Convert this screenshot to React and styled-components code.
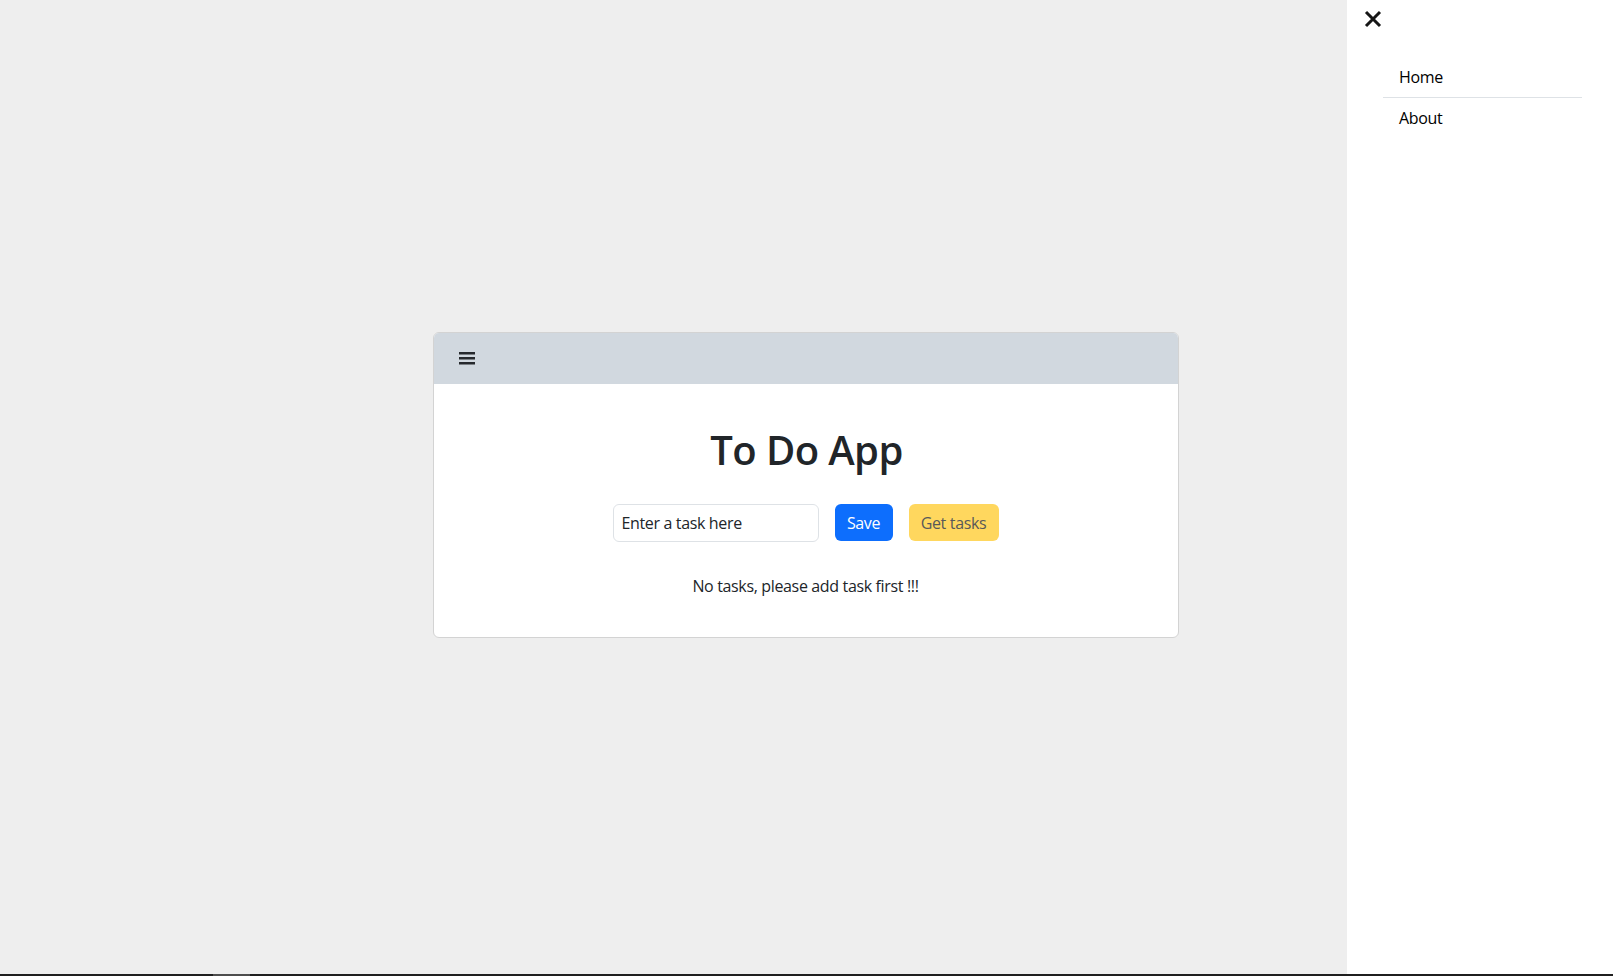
import React from "react";
import styled, { createGlobalStyle } from "styled-components";

const GlobalStyle = createGlobalStyle`
  html, body { margin: 0; padding: 0; }
  body {
    background: #eeeeee;
    font-family: "Open Sans", "Noto Sans", sans-serif;
    letter-spacing: -0.35px;
    color: #212529;
    overflow: hidden;
  }
  * { box-sizing: border-box; }
`;

const Page = styled.div`
  height: 974px;
  display: flex;
  align-items: center;
  justify-content: center;
`;

const Card = styled.div`
  width: 746px;
  background: #fff;
  border: 1px solid #d3d3d3;
  border-radius: 6px;
  overflow: hidden;
  margin-top: -5px;
  margin-left: -2px;
`;

const CardHeader = styled.div`
  height: 51px;
  background: #d1d8df;
  display: flex;
  align-items: center;
  padding-left: 25px;
`;

const MenuButton = styled.button`
  border: 0;
  background: transparent;
  padding: 0;
  width: 16px;
  height: 13px;
  display: flex;
  cursor: pointer;
`;

const CardBody = styled.div`
  padding: 42px 16px 39px;
  display: flex;
  flex-direction: column;
  align-items: center;
`;

const Title = styled.h1`
  margin: 0 0 0 2px;
  font-size: 40px;
  line-height: 48px;
  font-weight: 600;
  letter-spacing: -0.6px;
  color: #212529;
`;

const FormRow = styled.div`
  margin-top: 30px;
  display: flex;
  gap: 16px;
  align-items: center;
`;

const TaskInput = styled.input`
  width: 206px;
  height: 38px;
  border: 1px solid #dee2e6;
  border-radius: 6px;
  padding: 6px 8px;
  font-family: inherit;
  letter-spacing: inherit;
  font-size: 16px;
  color: #212529;
  outline: none;
  &::placeholder { color: #212529; }
`;

const Button = styled.button`
  height: 37px;
  border: 0;
  border-radius: 6px;
  padding: 0;
  white-space: nowrap;
  font-family: inherit;
  letter-spacing: inherit;
  font-size: 16px;
  background: ${(p) => (p.$variant === "warning" ? "#ffd75e" : "#0d6efd")};
  color: ${(p) => (p.$variant === "warning" ? "#595959" : "#ffffff")};
  width: ${(p) => p.$w}px;
`;

const Message = styled.p`
  margin: 32px 0 0;
  font-size: 16px;
  line-height: 24px;
`;

const Sidebar = styled.aside`
  position: fixed;
  top: 0;
  right: 0;
  width: 266px;
  height: 974px;
  background: #fff;
  display: flex;
  flex-direction: column;
`;

const SideHeader = styled.div`
  height: 57px;
  padding: 10px 0 0 17px;
`;

const CloseButton = styled.button`
  border: 0;
  background: transparent;
  padding: 0;
  width: 18px;
  height: 18px;
  display: flex;
  cursor: pointer;
`;

const NavList = styled.ul`
  list-style: none;
  margin: 0 31px 0 36px;
  padding: 0;
`;

const NavItem = styled.li`
  padding: 8px 16px;
  font-size: 16px;
  line-height: 24px;
  color: #000;
  border-bottom: ${(p) => (p.$last ? "0" : "1px solid #dee2e6")};
`;

const ScrollTrack = styled.div`
  position: fixed;
  left: 0;
  bottom: 0;
  width: 100%;
  height: 2px;
  background: #1f1f1f;
`;

const ScrollThumb = styled.div`
  position: absolute;
  left: 213px;
  top: 0;
  width: 37px;
  height: 2px;
  background: #4d4d4d;
`;

export default function App() {
  return (
    <>
      <GlobalStyle />
      <Page>
        <Card>
          <CardHeader>
            <MenuButton aria-label="menu">
              <svg width="16" height="13" viewBox="0 0 16 13">
                <rect x="0" y="0" width="16" height="2.5" fill="#26292d" />
                <rect x="0" y="5" width="16" height="2.5" fill="#26292d" />
                <rect x="0" y="10" width="16" height="2.5" fill="#26292d" />
              </svg>
            </MenuButton>
          </CardHeader>
          <CardBody>
            <Title>To Do App</Title>
            <FormRow>
              <TaskInput placeholder="Enter a task here" />
              <Button $w={58}>Save</Button>
              <Button $w={90} $variant="warning">Get tasks</Button>
            </FormRow>
            <Message>No tasks, please add task first !!!</Message>
          </CardBody>
        </Card>
      </Page>
      <Sidebar>
        <SideHeader>
          <CloseButton aria-label="close">
            <svg width="18" height="18" viewBox="0 0 18 18">
              <path d="M2 2 L16 16 M16 2 L2 16" stroke="#161616" strokeWidth="3" strokeLinecap="butt" />
            </svg>
          </CloseButton>
        </SideHeader>
        <NavList>
          <NavItem>Home</NavItem>
          <NavItem $last>About</NavItem>
        </NavList>
      </Sidebar>
      <ScrollTrack>
        <ScrollThumb />
      </ScrollTrack>
    </>
  );
}
